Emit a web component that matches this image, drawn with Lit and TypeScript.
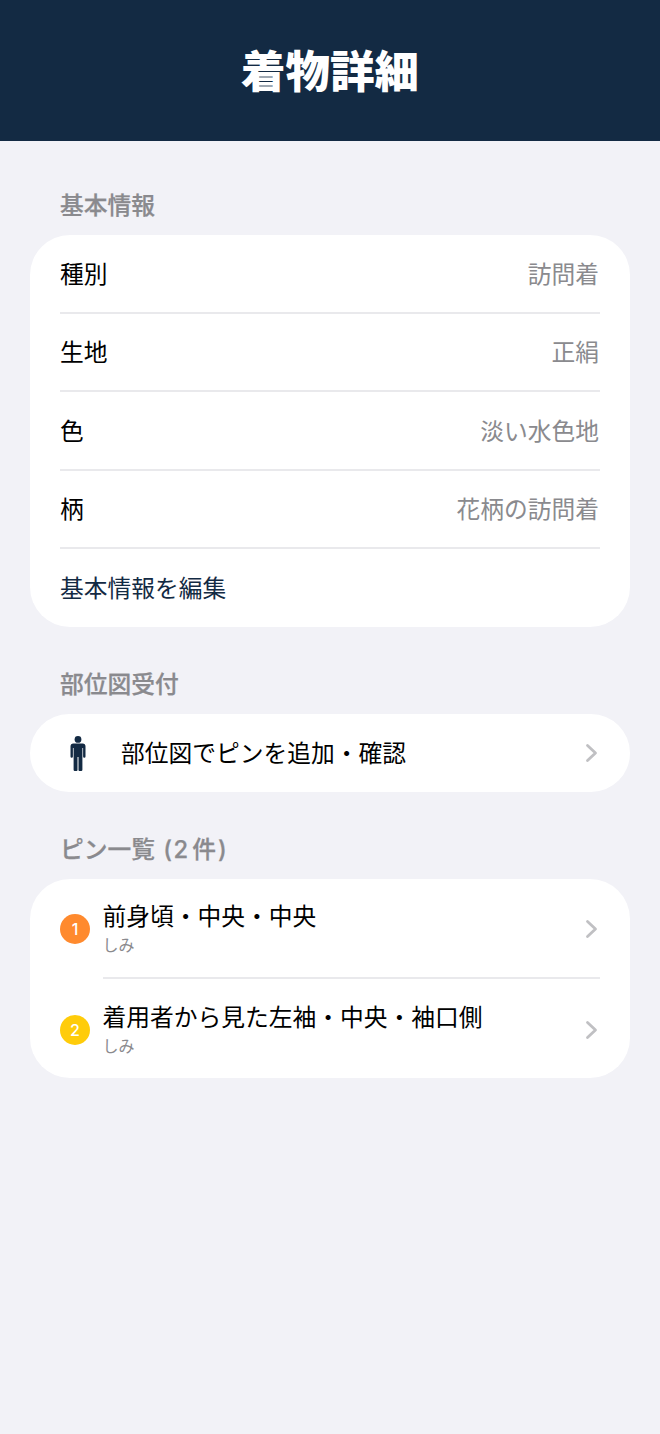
import { LitElement, html, css } from "lit";
import { customElement } from "lit/decorators.js";

const chevron = html`<svg class="chev" width="14" height="20" viewBox="0 0 14 20" fill="none"><path d="M2.5 2.5 L10.5 10 L2.5 17.5" stroke="#c0c0c3" stroke-width="2.8" stroke-linecap="round" stroke-linejoin="round"/></svg>`;

@customElement("app-root")
export class AppRoot extends LitElement {
  static styles = css`
    :host { display: block; min-height: 1434px; background: #f2f2f7; font-family: "Inter", "Noto Sans CJK JP", sans-serif; color: #000; }
    .hdr { height: 141px; background: #132a43; display: flex; align-items: center; justify-content: center; color: #fff; font-size: 44.5px; font-weight: 900; line-height: 1; padding-top: 4px; box-sizing: border-box; }
    .main { padding: 48px 30px 0; display: flex; flex-direction: column; }
    .label { font-size: 23.75px; line-height: 34px; font-weight: 500; -webkit-text-stroke: 0.25px #8a8a8e; color: #8a8a8e; padding: 0 30px; height: 46px; }
    .o { margin-left: 2px; }
    .d { margin-left: 1.5px; }
    .k { margin-left: 4px; }
    .c { margin-left: 2px; }
    .card { background: #fff; border-radius: 40px; margin-bottom: 41px; overflow: hidden; }
    .row { height: 76.5px; margin-left: 30px; padding: 3px 30px 0 0; display: flex; align-items: center; justify-content: space-between; font-size: 23.75px; line-height: 32px; box-sizing: border-box; }
    .row.last { height: 78px; padding-top: 1px; }
    .line { height: 2px; background: #e9e9ec; margin: 0 30px; }
    .val { color: #8a8a8e; margin-right: 1px; }
    .link { color: #132a43; }
    .nav { height: 78px; padding: 0 30px; display: flex; align-items: center; font-size: 23.75px; line-height: 32px; }
    .person { width: 36px; margin-right: 25px; display: flex; justify-content: center; }
    .grow { flex: 1; min-width: 0; }
    .navtext { padding-top: 1px; }
    .chev { flex: none; margin-right: 1px; }
    .pin { height: 98px; padding: 2px 30px 0; display: flex; align-items: center; box-sizing: border-box; }
    .pin.tall { height: 99px; }
    .badge { width: 30px; height: 30px; border-radius: 50%; color: #fff; font-size: 16px; font-weight: 500; display: flex; align-items: center; justify-content: center; margin-right: 12.5px; flex: none; }
    .orange { background: #ff8a2e; }
    .yellow { background: #ffcc0a; }
    .t { font-size: 23.75px; line-height: 30px; }
    .s { font-size: 16px; line-height: 22px; color: #8a8a8e; margin-top: 2px; }
    .pinline { height: 2px; background: #e9e9ec; margin: 0 30px 0 73px; }
  `;

  render() {
    const rows = [["種別", "訪問着"], ["生地", "正絹"], ["色", "淡い水色地"], ["柄", "花柄の訪問着"]];
    return html`
      <div class="hdr">着物詳細</div>
      <div class="main">
        <div class="label">基本情報</div>
        <div class="card">
          ${rows.map(([a, b]) => html`<div class="row"><span>${a}</span><span class="val">${b}</span></div><div class="line"></div>`)}
          <div class="row last link">基本情報を編集</div>
        </div>
        <div class="label">部位図受付</div>
        <div class="card">
          <div class="nav">
            <span class="person"><svg width="16" height="35" viewBox="0 0 16 35" fill="#132a43"><circle cx="8" cy="3.4" r="3.4"/><path d="M3.6 7.6h8.8A3 3 0 0 1 15.5 10.6V20.6a1.2 1.2 0 0 1-2.4 0V12h-.7v21.8a1.2 1.2 0 0 1-1.2 1.2H9.4a.9.9 0 0 1-.9-.9V21h-1v13.1a.9.9 0 0 1-.9.9H4.8a1.2 1.2 0 0 1-1.2-1.2V12h-.7v8.6a1.2 1.2 0 0 1-2.4 0V10.6A3 3 0 0 1 3.6 7.6z"/></svg></span>
            <span class="grow navtext">部位図でピンを追加・確認</span>
            ${chevron}
          </div>
        </div>
        <div class="label">ピン一覧 <span class="o">(</span><span class="d">2</span><span class="k">件</span><span class="c">)</span></div>
        <div class="card">
          <div class="pin"><span class="badge orange">1</span><div class="grow"><div class="t">前身頃・中央・中央</div><div class="s">しみ</div></div>${chevron}</div>
          <div class="pinline"></div>
          <div class="pin tall"><span class="badge yellow">2</span><div class="grow"><div class="t">着用者から見た左袖・中央・袖口側</div><div class="s">しみ</div></div>${chevron}</div>
        </div>
      </div>
    `;
  }
}
